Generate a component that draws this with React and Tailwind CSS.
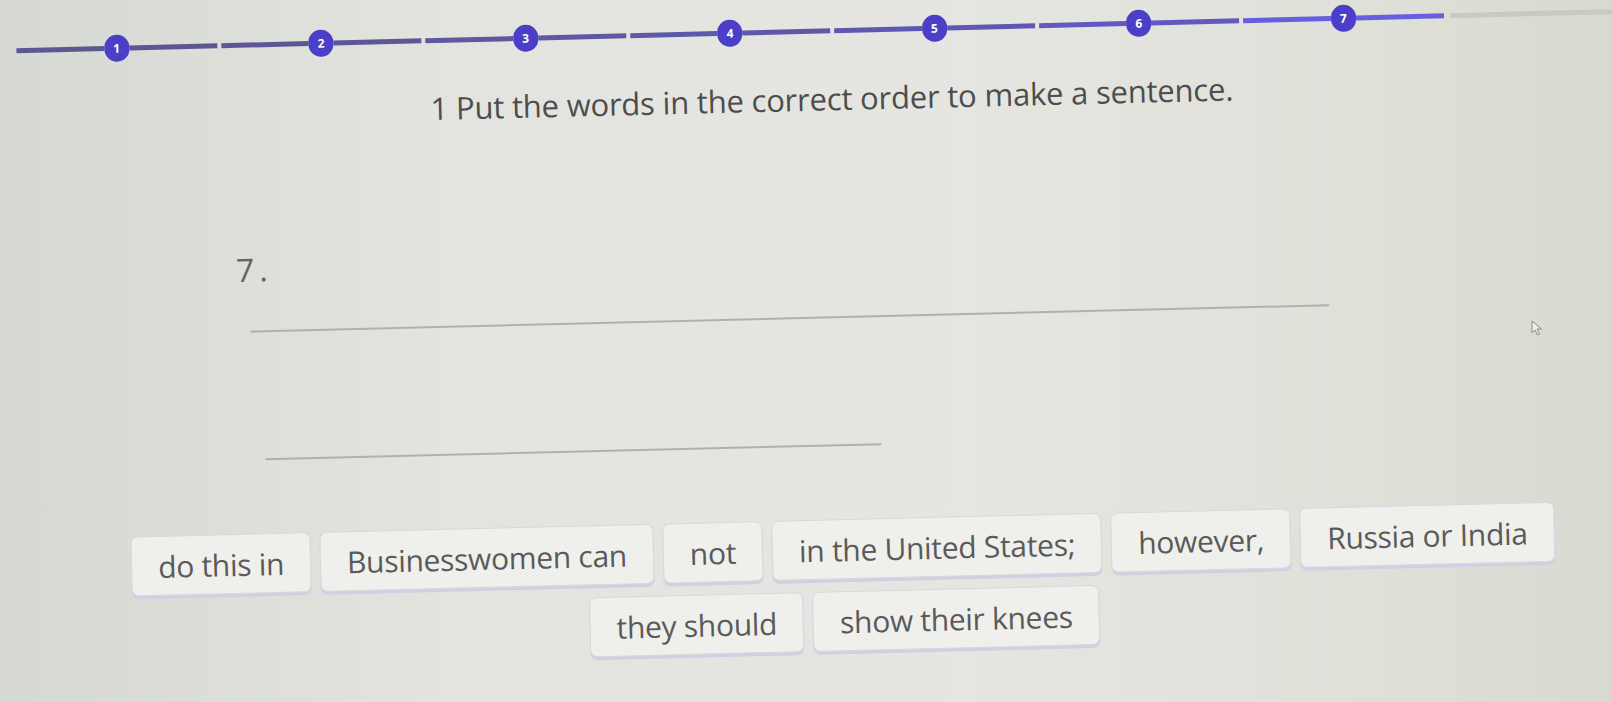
import React from "react";

const STEPS = [
  { n: 1, line: "bg-[#5b5794]" },
  { n: 2, line: "bg-[#5c5898]" },
  { n: 3, line: "bg-[#5d58a0]" },
  { n: 4, line: "bg-[#5e58a8]" },
  { n: 5, line: "bg-[#5f57b4]" },
  { n: 6, line: "bg-[#6158c2]" },
  { n: 7, line: "bg-[#6a5ee0]" },
];

const ROW_ONE = ["do this in", "Businesswomen can", "not", "in the United States;", "however,", "Russia or India"];
const ROW_TWO = ["they should", "show their knees"];

function Step({ n, line }) {
  return (
    <div className="flex items-center w-[204.5px] px-[2px]">
      <div className={`flex-1 h-[5px] ${line}`} />
      <div className="w-[25px] h-[27px] rounded-full bg-[#4a3fc6] flex items-center justify-center text-white text-[12px] font-bold leading-none">
        {n}
      </div>
      <div className={`flex-1 h-[5px] ${line}`} />
    </div>
  );
}

function Chip({ text }) {
  return (
    <div className="h-[60px] px-[26px] flex items-center rounded-[7px] bg-[#efefec] border border-[#d8d7de] shadow-[0_3px_0_#d2cfe2] text-[30px] tracking-[-0.3px] text-[#5a5a5a] whitespace-nowrap">
      {text}
    </div>
  );
}

export default function App() {
  return (
    <div className="relative w-[1612px] h-[702px] overflow-hidden bg-[linear-gradient(90deg,#d6d8d2_0%,#e3e4df_28%,#e5e6e1_60%,#dfe0d8_85%,#d8dad1_100%)] font-['Open_Sans',sans-serif]">
      <div className="flex flex-col w-[1612px] h-[702px] rotate-[-1.4deg]">
        {/* progress stepper */}
        <div className="flex items-center pl-[22px] mt-[18px] h-[27px]">
          {STEPS.map((s) => (
            <Step key={s.n} {...s} />
          ))}
          <div className="flex-1 h-[5px] ml-[4px] mr-[-40px] bg-[#c7c9c2]" />
        </div>

        <h1 className="mt-[36px] pl-[64px] text-center text-[31px] leading-[36px] tracking-[-0.2px] text-[#4d4d4d]">
          1 Put the words in the correct order to make a sentence.
        </h1>

        {/* answer area */}
        <div className="pl-[238px] mt-[121px] flex flex-col">
          <div className="text-[32px] leading-[36px] tracking-[5px] text-[#636363]">7.</div>
          <div className="mt-[43px] ml-[13px] w-[1079px] h-[2px] bg-[#b0b1ad]" />
          <div className="mt-[126px] ml-[25px] w-[616px] h-[2px] bg-[#b0b1ad]" />
        </div>

        {/* word bank */}
        <div className="mt-[73px] pl-[64px] flex flex-col gap-[12px]">
          <div className="flex justify-center gap-[9px]">
            {ROW_ONE.map((w) => (
              <Chip key={w} text={w} />
            ))}
          </div>
          <div className="flex justify-center gap-[9px]">
            {ROW_TWO.map((w) => (
              <Chip key={w} text={w} />
            ))}
          </div>
        </div>
      </div>

      {/* mouse pointer */}
      <svg className="absolute left-[1531px] top-[320px]" width="12" height="16" viewBox="0 0 12 16">
        <path d="M1 1 L1 13 L4 10 L6.5 15 L8.5 14 L6 9 L10.5 9 Z" fill="#eeeeea" stroke="#8a8b86" strokeWidth="1" strokeLinejoin="round" />
      </svg>
    </div>
  );
}
